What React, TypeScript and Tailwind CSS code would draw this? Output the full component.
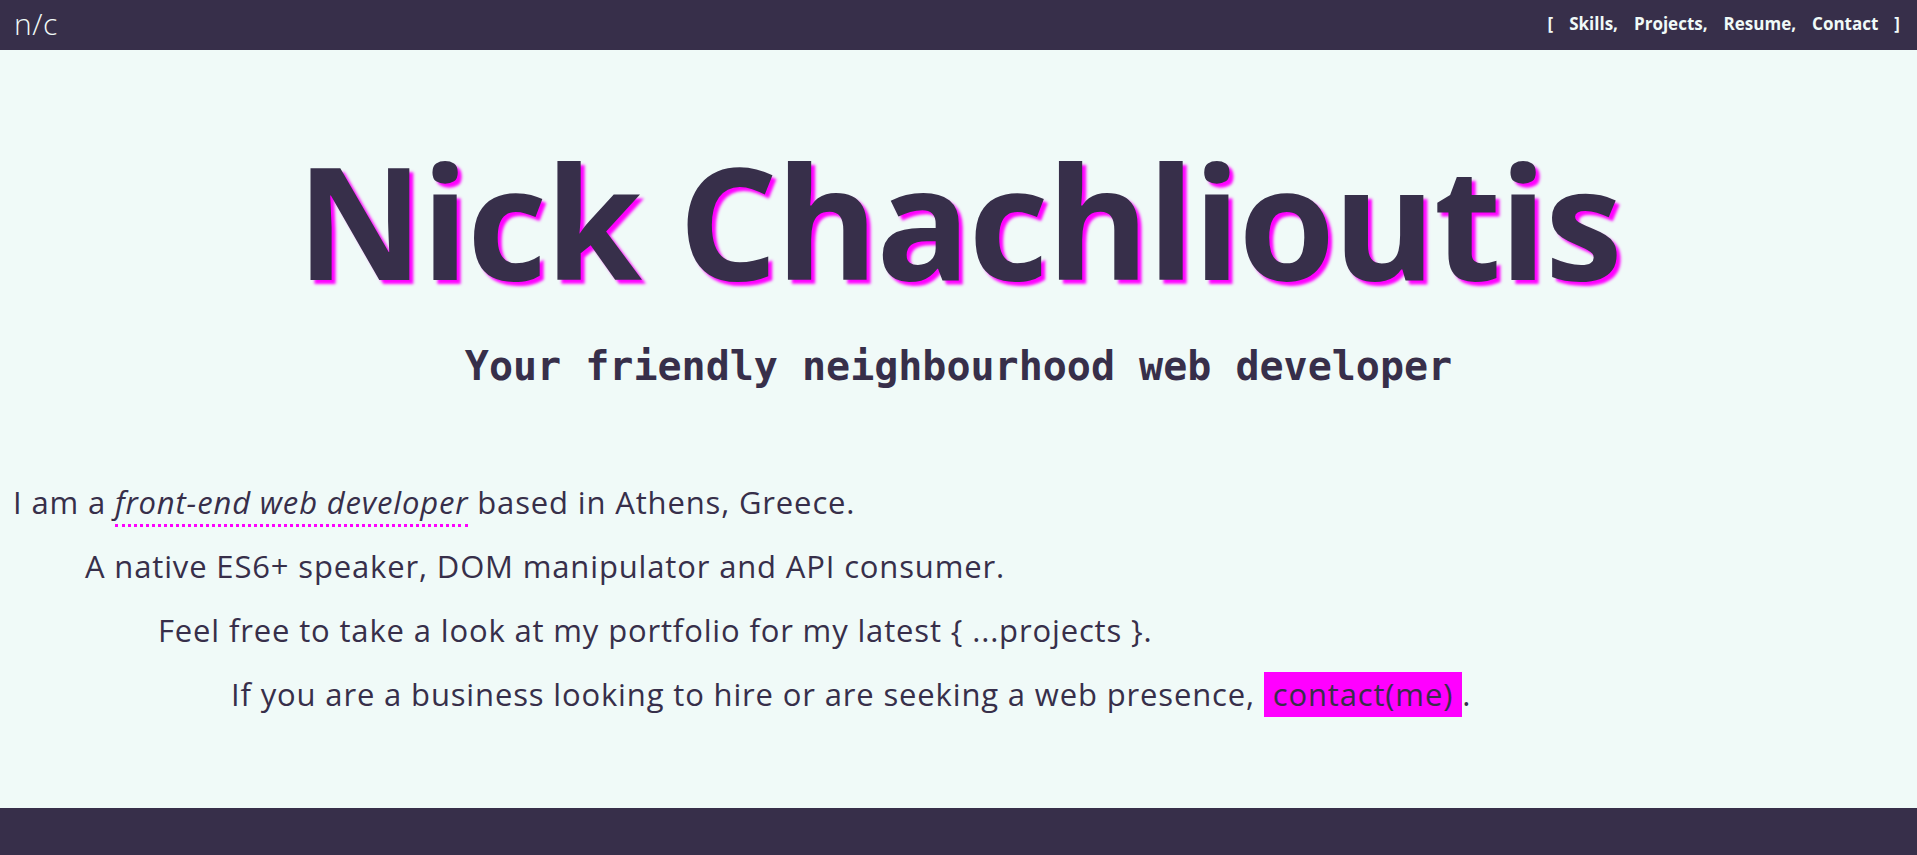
const navItems = ["Skills,", "Projects,", "Resume,", "Contact"];

function Header() {
  return (
    <header className="h-[50px] shrink-0 bg-[#372f4a] flex items-center justify-between pl-[14px] pr-[17px] text-[#f0faf8]">
      <a className="text-[30px] font-light leading-none tracking-[0.5px] -mt-[2px]">n/c</a>
      <nav className="flex items-center gap-[16px] text-[17px] font-bold leading-none -mt-[3px]">
        <span>[</span>
        {navItems.map((item) => (
          <a key={item} className="cursor-pointer">
            {item}
          </a>
        ))}
        <span>]</span>
      </nav>
    </header>
  );
}

function About() {
  return (
    <div className="pl-[13px] text-[31px] leading-[64px] tracking-[0.85px] text-[#372f4a]">
      <p>
        I am a{" "}
        <em className="border-b-[3px] border-dotted border-[#ff00ff] pb-[1px]">
          front-end web developer
        </em>{" "}
        based in Athens, Greece.
      </p>
      <p className="ml-[72px]">A native ES6+ speaker, DOM manipulator and API consumer.</p>
      <p className="ml-[145px]">Feel free to take a look at my portfolio for my latest {"{ ...projects }"}.</p>
      <p className="ml-[218px]">
        If you are a business looking to hire or are seeking a web presence,{" "}
        <a className="inline-block bg-[#ff00ff] px-[9px] leading-[45px] cursor-pointer">contact(me)</a>.
      </p>
    </div>
  );
}

export default function App() {
  return (
    <div
      className="h-screen flex flex-col bg-[#f0faf8] text-[#372f4a]"
      style={{ fontFamily: '"Open Sans", "Noto Sans", sans-serif' }}
    >
      <Header />
      <main className="flex-1 flex flex-col">
        <h1 className="mt-[92px] text-center text-[156px] font-bold leading-none tracking-[-2px] [text-shadow:4px_4px_3px_#ff00ff]">
          Nick Chachlioutis
        </h1>
        <h2 className="mt-[48px] text-center text-[40px] font-bold leading-none font-['DejaVu_Sans_Mono',monospace]">
          Your friendly neighbourhood web developer
        </h2>
        <div className="mt-[84px]">
          <About />
        </div>
      </main>
      <footer className="h-[47px] shrink-0 bg-[#372f4a]" />
    </div>
  );
}
